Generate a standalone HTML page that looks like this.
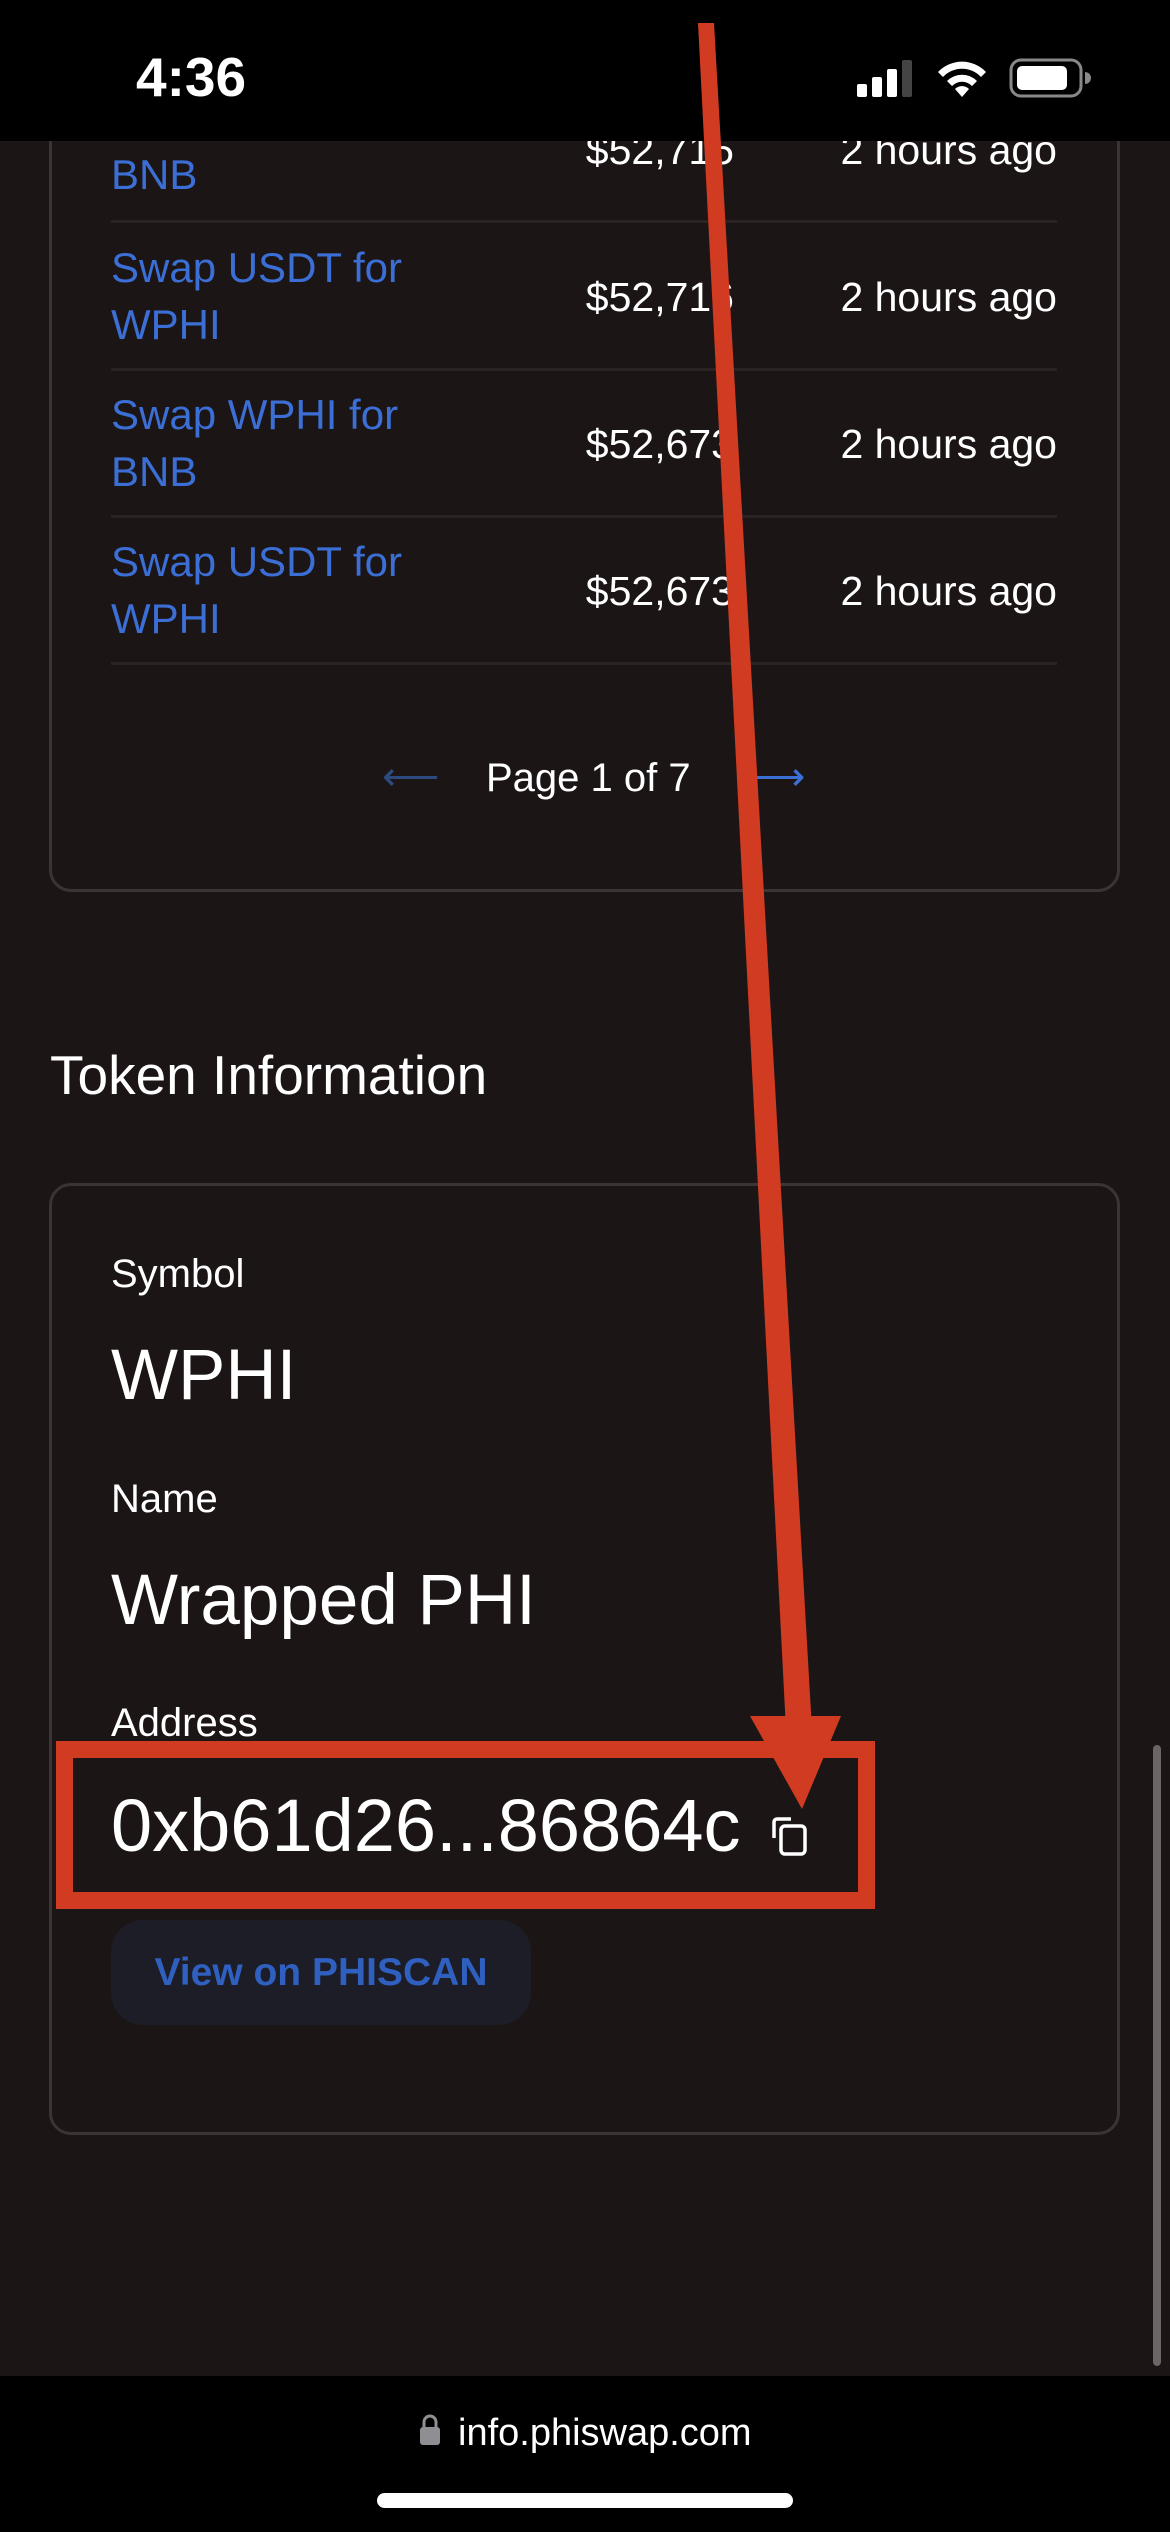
<!DOCTYPE html>
<html><head><meta charset="utf-8"><style>
*{margin:0;padding:0;box-sizing:border-box}
body{width:1170px;height:2532px;background:#1c1516;font-family:"Liberation Sans",sans-serif;color:#fff;position:relative;overflow:hidden}
.abs{position:absolute}
.card{position:absolute;left:49px;width:1071px;border:3px solid #3b3334;border-radius:22px}
.row{position:absolute;left:111px;width:946px;height:147px;border-bottom:3px solid #2a2223}
.lk{position:absolute;left:0;color:#3b6fd6;font-size:42px;line-height:57px}
.amt{position:absolute;right:323px;font-size:41px}
.tm{position:absolute;right:0;font-size:41px}
.lbl{position:absolute;left:111px;font-size:40px;line-height:1}
.val{position:absolute;left:111px;font-size:71px;line-height:1}
</style></head><body>
<div class="card" style="top:-40px;height:932px"></div>

<div class="row" style="top:76px"><div class="lk" style="top:70px">BNB</div><div class="amt" style="top:51px">$52,715</div><div class="tm" style="top:51px">2 hours ago</div></div>
<div class="row" style="top:224px"><div class="lk" style="top:15px">Swap USDT for<br>WPHI</div><div class="amt" style="top:50px">$52,716</div><div class="tm" style="top:50px">2 hours ago</div></div>
<div class="row" style="top:371px"><div class="lk" style="top:15px">Swap WPHI for<br>BNB</div><div class="amt" style="top:50px">$52,673</div><div class="tm" style="top:50px">2 hours ago</div></div>
<div class="row" style="top:518px"><div class="lk" style="top:15px">Swap USDT for<br>WPHI</div><div class="amt" style="top:50px">$52,673</div><div class="tm" style="top:50px">2 hours ago</div></div>

<div class="abs" style="left:382px;top:754px;font-size:40px;color:#2d4a80">⟵</div>
<div class="abs" style="left:486px;top:756px;font-size:40px">Page 1 of 7</div>
<div class="abs" style="left:748px;top:754px;font-size:40px;color:#3b6fd6">⟶</div>

<div class="abs" style="left:50px;top:1043px;font-size:55px">Token Information</div>

<div class="card" style="top:1183px;height:952px"></div>
<div class="lbl" style="top:1254px">Symbol</div>
<div class="val" style="top:1340px">WPHI</div>
<div class="lbl" style="top:1479px">Name</div>
<div class="val" style="top:1565px">Wrapped PHI</div>
<div class="lbl" style="top:1703px">Address</div>
<div class="val" style="top:1789px;font-size:74px">0xb61d26...86864c</div>
<svg class="abs" style="left:768px;top:1814px" width="44" height="44" viewBox="0 0 44 44" fill="none" stroke="#fff" stroke-width="3.5"><path d="M6 24V8a3 3 0 0 1 3-3h14"/><rect x="13" y="12" width="24" height="28" rx="4"/></svg>

<div class="abs" style="left:111px;top:1920px;width:420px;height:105px;border-radius:32px;background:#1c1d26;color:#2f5fbf;font-weight:bold;font-size:39px;line-height:105px;text-align:center">View on PHISCAN</div>

<div class="abs" style="left:1153px;top:1745px;width:8px;height:621px;border-radius:4px;background:#6b6566"></div>

<!-- status bar -->
<div class="abs" style="left:0;top:0;width:1170px;height:141px;background:#000"></div>
<div class="abs" style="left:136px;top:45px;font-size:55px;font-weight:bold">4:36</div>
<svg class="abs" style="left:855px;top:58px" width="60" height="40"><rect x="2" y="26" width="10" height="13" rx="2" fill="#fff"/><rect x="17" y="19" width="10" height="20" rx="2" fill="#fff"/><rect x="32" y="11" width="10" height="28" rx="2" fill="#fff"/><rect x="47" y="2" width="10" height="37" rx="2" fill="#444"/></svg>
<svg class="abs" style="left:935px;top:58px" width="54" height="40" viewBox="0 0 54 40"><path d="M27 39l-7-8a10 10 0 0 1 14 0z" fill="#fff"/><path d="M12 23a21 21 0 0 1 30 0l-5 5a14 14 0 0 0-20 0z" fill="#fff"/><path d="M3 14a33 33 0 0 1 48 0l-5 5a26 26 0 0 0-38 0z" fill="#fff"/></svg>
<svg class="abs" style="left:1009px;top:58px" width="84" height="40"><rect x="2" y="2" width="70" height="36" rx="10" fill="none" stroke="#888" stroke-width="3"/><rect x="8" y="8" width="50" height="24" rx="5" fill="#fff"/><path d="M76 14a6 6 0 0 1 0 12z" fill="#888"/></svg>

<!-- bottom bar -->
<div class="abs" style="left:0;top:2376px;width:1170px;height:156px;background:#000"></div>
<svg class="abs" style="left:419px;top:2413px" width="22" height="34"><path d="M5 14V9a6 6 0 0 1 12 0v5" stroke="#8e8e93" stroke-width="3" fill="none"/><rect x="1" y="14" width="20" height="18" rx="3" fill="#8e8e93"/></svg>
<div class="abs" style="left:458px;top:2412px;font-size:38px">info.phiswap.com</div>
<div class="abs" style="left:377px;top:2493px;width:416px;height:15px;border-radius:8px;background:#fff"></div>

<!-- annotation -->
<svg class="abs" style="left:0;top:0" width="1170" height="2532">
<polygon points="698,23 714,23 812,1730 786,1730" fill="#d13b22"/>
<polygon points="750,1716 841,1716 802,1809" fill="#d13b22"/>
<rect x="64.5" y="1749.5" width="802" height="151" fill="none" stroke="#d13b22" stroke-width="17"/>
</svg>
</body></html>
